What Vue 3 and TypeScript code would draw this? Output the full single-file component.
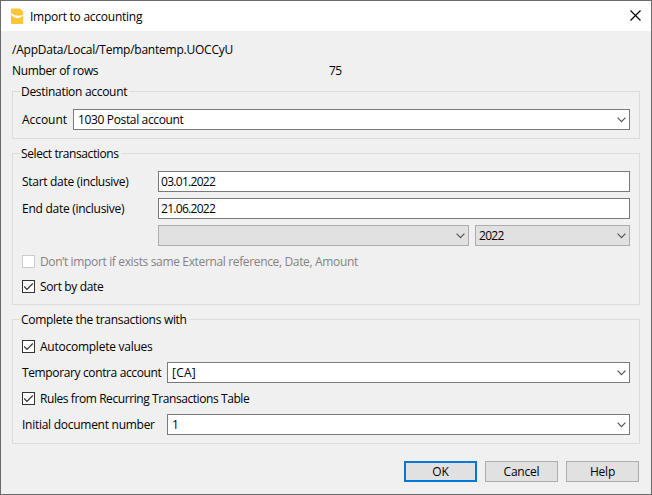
<script setup lang="ts">
import { ref } from 'vue'

const importedFile = '/AppData/Local/Temp/bantemp.UOCCyU'
const rowCount = 75
const account = ref('1030 Postal account')
const startDate = ref('03.01.2022')
const endDate = ref('21.06.2022')
const year = ref('2022')
const contraAccount = ref('[CA]')
const documentNumber = ref('1')
</script>

<template>
  <main class="dialog">
    <header class="titlebar">
      <svg class="logo" width="13" height="17" viewBox="0 0 13 17">
        <path d="M1 .5h8l3.2 3.2V15q0 1-1 1H1q-1 0-1-1V1.5q0-1 1-1z" fill="#fec534" />
        <path d="M0 5.2Q5.5 9.3 12.3 7v.8Q5.5 13 0 6.8z" fill="#fff" />
      </svg>
      <h1 class="title"><span class="t-title">Import to accounting</span></h1>
      <svg class="close" width="11" height="11" viewBox="0 0 11 11">
        <path d="M.5.5l10 10M10.5.5l-10 10" stroke="#000" stroke-width="1.15" />
      </svg>
    </header>

    <section class="body">
      <div class="path t-path">{{ importedFile }}</div>
      <div class="count"><span class="t-rows">Number of rows</span><span class="digits">{{ rowCount }}</span></div>

      <fieldset class="group destination">
        <legend class="t-dest">Destination account</legend>
        <div class="row account">
          <label class="t-account">Account</label>
          <div class="field combo">
            <span class="t-postal">{{ account }}</span>
            <svg class="chevron" width="9" height="6" viewBox="0 0 9 6"><path d="M.6.7l3.9 3.9L8.4.7" /></svg>
          </div>
        </div>
      </fieldset>

      <fieldset class="group selection">
        <legend class="t-select">Select transactions</legend>
        <div class="row dates">
          <label class="t-start">Start date (inclusive)</label>
          <div class="field"><span class="t-date">{{ startDate }}</span></div>
          <label class="t-end">End date (inclusive)</label>
          <div class="field"><span class="t-date">{{ endDate }}</span></div>
          <div class="periods">
            <div class="field combo gray">
              <span></span>
              <svg class="chevron" width="9" height="6" viewBox="0 0 9 6"><path d="M.6.7l3.9 3.9L8.4.7" /></svg>
            </div>
            <div class="field combo gray">
              <span class="t-year">{{ year }}</span>
              <svg class="chevron" width="9" height="6" viewBox="0 0 9 6"><path d="M.6.7l3.9 3.9L8.4.7" /></svg>
            </div>
          </div>
        </div>
        <div class="check disabled">
          <i class="box"></i><span class="t-dont">Don’t import if exists same External reference, Date, Amount</span>
        </div>
        <div class="check sort">
          <i class="box"><svg width="11" height="11" viewBox="0 0 11 11"><path d="M1.2 5.5l2.8 2.8 5.8-5.8" /></svg></i>
          <span class="t-sort">Sort by date</span>
        </div>
      </fieldset>

      <fieldset class="group completion">
        <legend class="t-complete">Complete the transactions with</legend>
        <div class="check">
          <i class="box"><svg width="11" height="11" viewBox="0 0 11 11"><path d="M1.2 5.5l2.8 2.8 5.8-5.8" /></svg></i>
          <span class="t-auto">Autocomplete values</span>
        </div>
        <div class="row contra">
          <label class="t-contra">Temporary contra account</label>
          <div class="field combo">
            <span class="t-ca">{{ contraAccount }}</span>
            <svg class="chevron" width="9" height="6" viewBox="0 0 9 6"><path d="M.6.7l3.9 3.9L8.4.7" /></svg>
          </div>
        </div>
        <div class="check">
          <i class="box"><svg width="11" height="11" viewBox="0 0 11 11"><path d="M1.2 5.5l2.8 2.8 5.8-5.8" /></svg></i>
          <span class="t-rules">Rules from Recurring Transactions Table</span>
        </div>
        <div class="row contra">
          <label class="t-initial">Initial document number</label>
          <div class="field combo">
            <span>{{ documentNumber }}</span>
            <svg class="chevron" width="9" height="6" viewBox="0 0 9 6"><path d="M.6.7l3.9 3.9L8.4.7" /></svg>
          </div>
        </div>
      </fieldset>

      <footer class="actions">
        <button class="primary">OK</button>
        <button>Cancel</button>
        <button>Help</button>
      </footer>
    </section>
  </main>
</template>

<style>
body {
  margin: 0;
}
</style>

<style scoped>
.dialog {
  box-sizing: border-box;
  width: 652px;
  height: 495px;
  border: 1px solid #6b6b6b;
  background: #f0f0f0;
  color: #000;
  font: 12px/17px 'Open Sans', 'Noto Sans', sans-serif;
  letter-spacing: -0.2px;
  white-space: nowrap;
  overflow: hidden;
}
.titlebar {
  display: flex;
  align-items: center;
  height: 30px;
  padding: 0 10px 0 10px;
  background: #fff;
}
.logo {
  display: block;
}
.title {
  flex: 1;
  margin: 0 0 0 6px;
  font: inherit;
}
.close {
  display: block;
  margin-bottom: 2px;
}
.body {
  padding: 10px 11px 0;
}
.path {
  height: 21px;
}
.count {
  display: grid;
  grid-template-columns: 317px 1fr;
  height: 21px;
}
.group {
  box-sizing: border-box;
  min-width: 0;
  margin: 0 0 6px;
  padding: 9px 9px 0;
  border: 1px solid #dcdcdc;
}
.group legend {
  height: 17px;
  margin-left: -2px;
  padding: 0 2px 0 1px;
}
.destination {
  height: 56px;
}
.selection {
  height: 160px;
}
.completion {
  height: 133px;
  padding-top: 12px;
}
.row {
  display: grid;
  align-items: center;
}
.account {
  grid-template-columns: 51px 1fr;
}
.dates {
  grid-template-columns: 136px 1fr;
  row-gap: 6px;
}
.periods {
  grid-column: 2;
  display: grid;
  grid-template-columns: 311px 155px;
  column-gap: 6px;
}
.contra {
  grid-template-columns: 145px 1fr;
  margin: 9px 0;
}
.field {
  box-sizing: border-box;
  display: flex;
  align-items: center;
  height: 21px;
  padding: 0 2px;
  border: 1px solid #7a7a7a;
  background: #fff;
}
.combo {
  justify-content: space-between;
  padding: 0 3px 0 4px;
}
.gray {
  padding-left: 3px;
  border-color: #adadad;
  background: #e1e1e1;
}
.chevron {
  fill: none;
  stroke: #555;
  stroke-width: 1.2;
}
.check {
  display: flex;
  align-items: center;
  gap: 5px;
  height: 13px;
}
.disabled {
  margin-top: 9px;
  color: #838383;
}
.sort {
  margin-top: 12px;
}
.box {
  box-sizing: border-box;
  width: 13px;
  height: 13px;
  border: 1px solid #333;
  background: #fff;
}
.disabled .box {
  border-color: #ccc;
}
.box svg {
  display: block;
  fill: none;
  stroke: #333;
  stroke-width: 1.2;
}
/* Tracking per label keeps the wide face within native dialog metrics. */
.t-title,
.t-auto {
  letter-spacing: -0.25px;
}
.t-path {
  letter-spacing: -0.23px;
}
.t-rows,
.t-sort,
.t-postal,
.t-dont {
  letter-spacing: -0.35px;
}
.t-dest,
.t-start,
.t-complete {
  letter-spacing: -0.3px;
}
.t-end,
.t-initial {
  letter-spacing: -0.27px;
}
.t-account {
  letter-spacing: -0.05px;
}
.t-select {
  letter-spacing: -0.4px;
}
.t-contra {
  letter-spacing: -0.37px;
}
.t-rules {
  letter-spacing: -0.42px;
}
.t-date,
.t-year,
.digits {
  letter-spacing: -0.7px;
}
.t-ca {
  letter-spacing: 0.2px;
}
.actions {
  display: flex;
  justify-content: flex-end;
  gap: 8px;
  margin-top: 17px;
  padding-right: 1px;
}
.actions button {
  box-sizing: border-box;
  width: 73px;
  height: 21px;
  padding: 0;
  border: 1px solid #adadad;
  background: #e1e1e1;
  color: #000;
  font: inherit;
  line-height: 19px;
  letter-spacing: inherit;
}
.actions .primary {
  border: 2px solid #0078d7;
  line-height: 17px;
}
</style>
